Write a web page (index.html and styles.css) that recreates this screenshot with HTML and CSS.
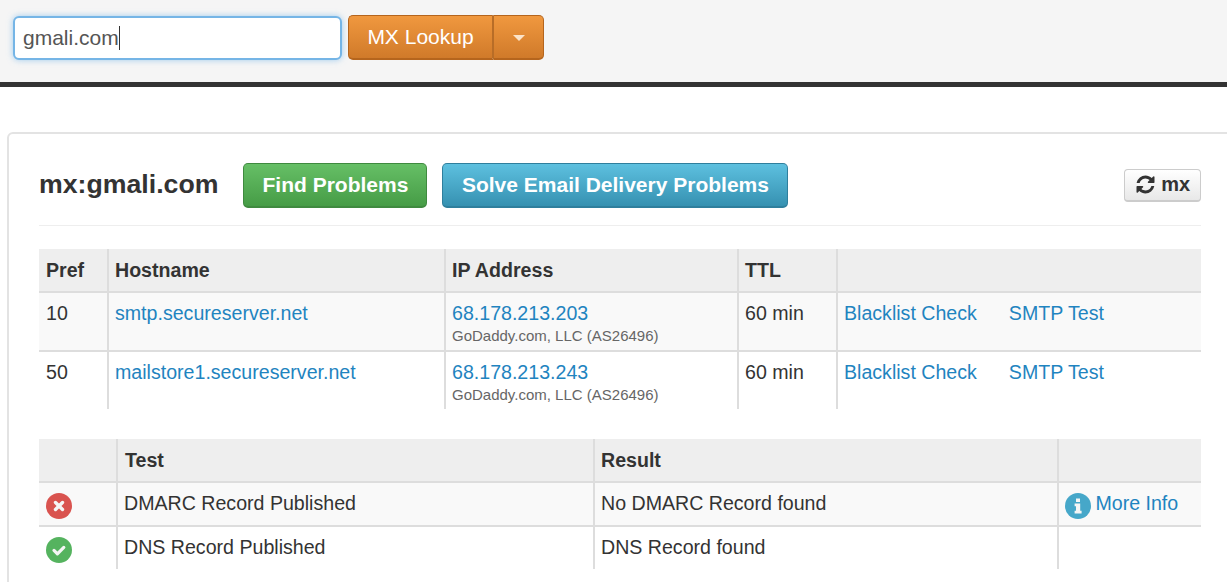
FILE: index.html
```html
<!DOCTYPE html>
<html lang="en">
  <head>
    <meta charset="UTF-8" />
    <title>MX Lookup</title>
    <link rel="stylesheet" href="styles.css">
  </head>
  <body>
    <div class="search-bar">
      <div class="search-input"><span>gmali.com</span><i class="caret-line"></i></div>
      <div class="btn-group">
        <button class="btn-orange btn-main">MX Lookup</button>
        <button class="btn-orange btn-drop"><i class="caret"></i></button>
      </div>
    </div>

    <div class="card">
      <div class="card-head">
        <h2>mx:gmali.com</h2>
        <button class="btn btn-green">Find Problems</button>
        <button class="btn btn-blue">Solve Email Delivery Problems</button>
        <button class="btn-refresh">
          <svg class="refresh-icon" viewBox="0 0 1792 1792"><path d="M1639 1056q0 5-1 7-64 268-268 434.5t-478 166.5q-146 0-282.5-55t-243.5-157l-129 129q-19 19-45 19t-45-19-19-45v-448q0-26 19-45t45-19h448q26 0 45 19t19 45-19 45l-137 137q71 66 161 102t187 36q134 0 250-65t186-179q11-17 53-117 8-23 30-23h192q13 0 22.5 9.5t9.5 22.5zm25-800v448q0 26-19 45t-45 19h-448q-26 0-45-19t-19-45 19-45l138-138q-148-137-349-137-134 0-250 65t-186 179q-11 17-53 117-8 23-30 23h-199q-13 0-22.5-9.5t-9.5-22.5v-7q65-268 270-434.5t480-166.5q146 0 284 55.5t245 156.5l130-129q19-19 45-19t45 19 19 45z"/></svg>
          mx
        </button>
      </div>

      <table class="grid mx-table">
        <colgroup>
          <col class="c-pref"><col class="c-host"><col class="c-ip"><col class="c-ttl"><col>
        </colgroup>
        <thead>
          <tr><th>Pref</th><th>Hostname</th><th>IP Address</th><th>TTL</th><th></th></tr>
        </thead>
        <tbody>
          <tr>
            <td>10</td>
            <td><a href="#">smtp.secureserver.net</a></td>
            <td><a href="#">68.178.213.203</a><small>GoDaddy.com, LLC (AS26496)</small></td>
            <td>60 min</td>
            <td><a href="#" class="action">Blacklist Check</a><a href="#">SMTP Test</a></td>
          </tr>
          <tr>
            <td>50</td>
            <td><a href="#">mailstore1.secureserver.net</a></td>
            <td><a href="#">68.178.213.243</a><small>GoDaddy.com, LLC (AS26496)</small></td>
            <td>60 min</td>
            <td><a href="#" class="action">Blacklist Check</a><a href="#">SMTP Test</a></td>
          </tr>
        </tbody>
      </table>

      <table class="grid test-table">
        <colgroup>
          <col class="c-icon"><col class="c-test"><col class="c-result"><col>
        </colgroup>
        <thead>
          <tr><th></th><th>Test</th><th>Result</th><th></th></tr>
        </thead>
        <tbody>
          <tr>
            <td class="icon-cell">
              <svg class="status-icon" viewBox="0 0 26 26"><circle cx="13" cy="13" r="13" fill="#d9534f"/><path d="M9.5 9.5l7 7M16.5 9.5l-7 7" stroke="#f5f5f5" stroke-width="3.4" stroke-linecap="round"/></svg>
            </td>
            <td>DMARC Record Published</td>
            <td>No DMARC Record found</td>
            <td class="info-cell">
              <a href="#">
                <svg class="status-icon" viewBox="0 0 26 26"><circle cx="13" cy="13" r="13" fill="#46a7c9"/><path d="M11 5.5h4v3.4h-4zM9.6 10.6h5.6v7.2h1.4v2.7h-7v-2.7h1.4v-4.5h-1.4z" fill="#f5f5f5"/></svg>
                More Info
              </a>
            </td>
          </tr>
          <tr>
            <td class="icon-cell">
              <svg class="status-icon" viewBox="0 0 26 26"><circle cx="13" cy="13" r="13" fill="#55b35f"/><path d="M8 13.4l3.4 3.4 6.4-6.4" fill="none" stroke="#f5f5f5" stroke-width="3.2" stroke-linecap="round" stroke-linejoin="round"/></svg>
            </td>
            <td>DNS Record Published</td>
            <td>DNS Record found</td>
            <td></td>
          </tr>
        </tbody>
      </table>
    </div>
  </body>
</html>
```

FILE: styles.css
```css
html, body {
  height: 582px;
  overflow: hidden;
}

body {
  margin: 0;
  font-family: "Liberation Sans", Arial, sans-serif;
  font-size: 19.6px;
  line-height: 28px;
  color: #333;
  background: #fff;
}

a {
  color: #1f84c0;
  text-decoration: none;
}

.search-bar {
  display: flex;
  align-items: center;
  gap: 6px;
  height: 87px;
  padding: 0 0 7px 13px;
  box-sizing: border-box;
  background: #f5f5f5;
  border-bottom: 5px solid #333;
  font-size: 21px;
}

.search-input {
  display: flex;
  align-items: center;
  width: 329px;
  height: 44px;
  box-sizing: border-box;
  padding-left: 8px;
  background: #fff;
  border: 2px solid #75b5e6;
  border-radius: 6px;
  box-shadow: 0 0 6px rgba(102, 175, 233, 0.6);
  color: #555;
}

.caret-line {
  width: 1px;
  height: 24px;
  background: #333;
}

.btn-group {
  display: flex;
  height: 45px;
}

.btn-orange {
  border: 1px solid #b5651d;
  border-bottom-width: 2px;
  background: linear-gradient(#f0983f, #d07a2a);
  color: #fff;
  font: inherit;
  padding: 0;
}

.btn-main {
  width: 146px;
  border-radius: 5px 0 0 5px;
  border-right: 2px solid #b86d27;
}

.btn-drop {
  width: 50px;
  border-left: 0;
  border-radius: 0 5px 5px 0;
}

.caret {
  display: inline-block;
  border-top: 6px solid #fbe3c8;
  border-left: 6px solid transparent;
  border-right: 6px solid transparent;
  vertical-align: middle;
}

.card {
  width: 1300px;
  height: 600px;
  margin: 45px 0 0 7px;
  padding: 30px 0 0 30px;
  box-sizing: border-box;
  border: 2px solid #e3e3e3;
  border-radius: 6px;
}

.card-head {
  display: flex;
  align-items: center;
  width: 1162px;
  height: 62px;
  box-sizing: border-box;
  padding-bottom: 19px;
  border-bottom: 1px solid #eee;
}

.card-head h2 {
  margin: 0 25px 2px 0;
  font-size: 26.7px;
  line-height: 40px;
  color: #333;
}

.btn {
  height: 45px;
  padding: 0;
  border: 1px solid;
  border-bottom-width: 2px;
  border-radius: 5px;
  color: #fff;
  font: bold 21px "Liberation Sans", Arial, sans-serif;
}

.btn-green {
  width: 184px;
  margin-right: 15px;
  border-color: #3f8a3f;
  background: linear-gradient(#66bf66, #469c46);
}

.btn-blue {
  width: 346px;
  border-color: #2f7f9d;
  background: linear-gradient(#5dc0df, #3691b1);
}

.btn-refresh {
  width: 77px;
  height: 33px;
  margin-left: auto;
  padding: 0;
  border: 1px solid #ccc;
  border-bottom-width: 2px;
  border-radius: 4px;
  background: linear-gradient(#fff, #e8e8e8);
  color: #333;
  font: bold 20px "Liberation Sans", Arial, sans-serif;
}

.refresh-icon {
  width: 21px;
  height: 21px;
  fill: #333;
  vertical-align: -4px;
}

.grid {
  width: 1162px;
  table-layout: fixed;
  border-collapse: collapse;
}

.mx-table {
  margin-top: 23px;
}

.test-table {
  margin-top: 30px;
}

.grid th {
  height: 43px;
  padding: 0 6px;
  box-sizing: border-box;
  background: #eee;
  text-align: left;
  font-weight: bold;
  border-left: 2px solid #ddd;
  border-bottom: 2px solid #ddd;
}

.test-table th:nth-child(2) {
  padding-left: 7px;
}

.grid td {
  padding: 6px 6px 0;
  box-sizing: border-box;
  vertical-align: top;
  border-left: 2px solid #ddd;
  border-top: 2px solid #ddd;
}

.grid th:first-child,
.grid td:first-child {
  border-left: 0;
  padding-left: 7px;
}

.grid thead + tbody tr:first-child td {
  border-top: 0;
}

.grid tbody tr:first-child {
  background: #f9f9f9;
}

.mx-table td {
  height: 58px;
}

.mx-table tbody tr:first-child td {
  height: 59px;
}

.test-table td {
  height: 43px;
}

.test-table tbody tr:first-child td {
  height: 44px;
}

.c-pref { width: 69px; }
.c-host { width: 337px; }
.c-ip { width: 293px; }
.c-ttl { width: 99px; }

.c-icon { width: 78px; }
.c-test { width: 477px; }
.c-result { width: 464px; }

small {
  display: block;
  font-size: 15px;
  line-height: 17px;
  color: #666;
}

.action {
  margin-right: 32px;
}

.status-icon {
  display: inline-block;
  width: 26px;
  height: 26px;
  vertical-align: middle;
}

.icon-cell .status-icon {
  margin-top: 3px;
}

.info-cell {
  white-space: nowrap;
}

.info-cell .status-icon {
  margin: 3px -1px 0 0;
  vertical-align: -9px;
}
```
